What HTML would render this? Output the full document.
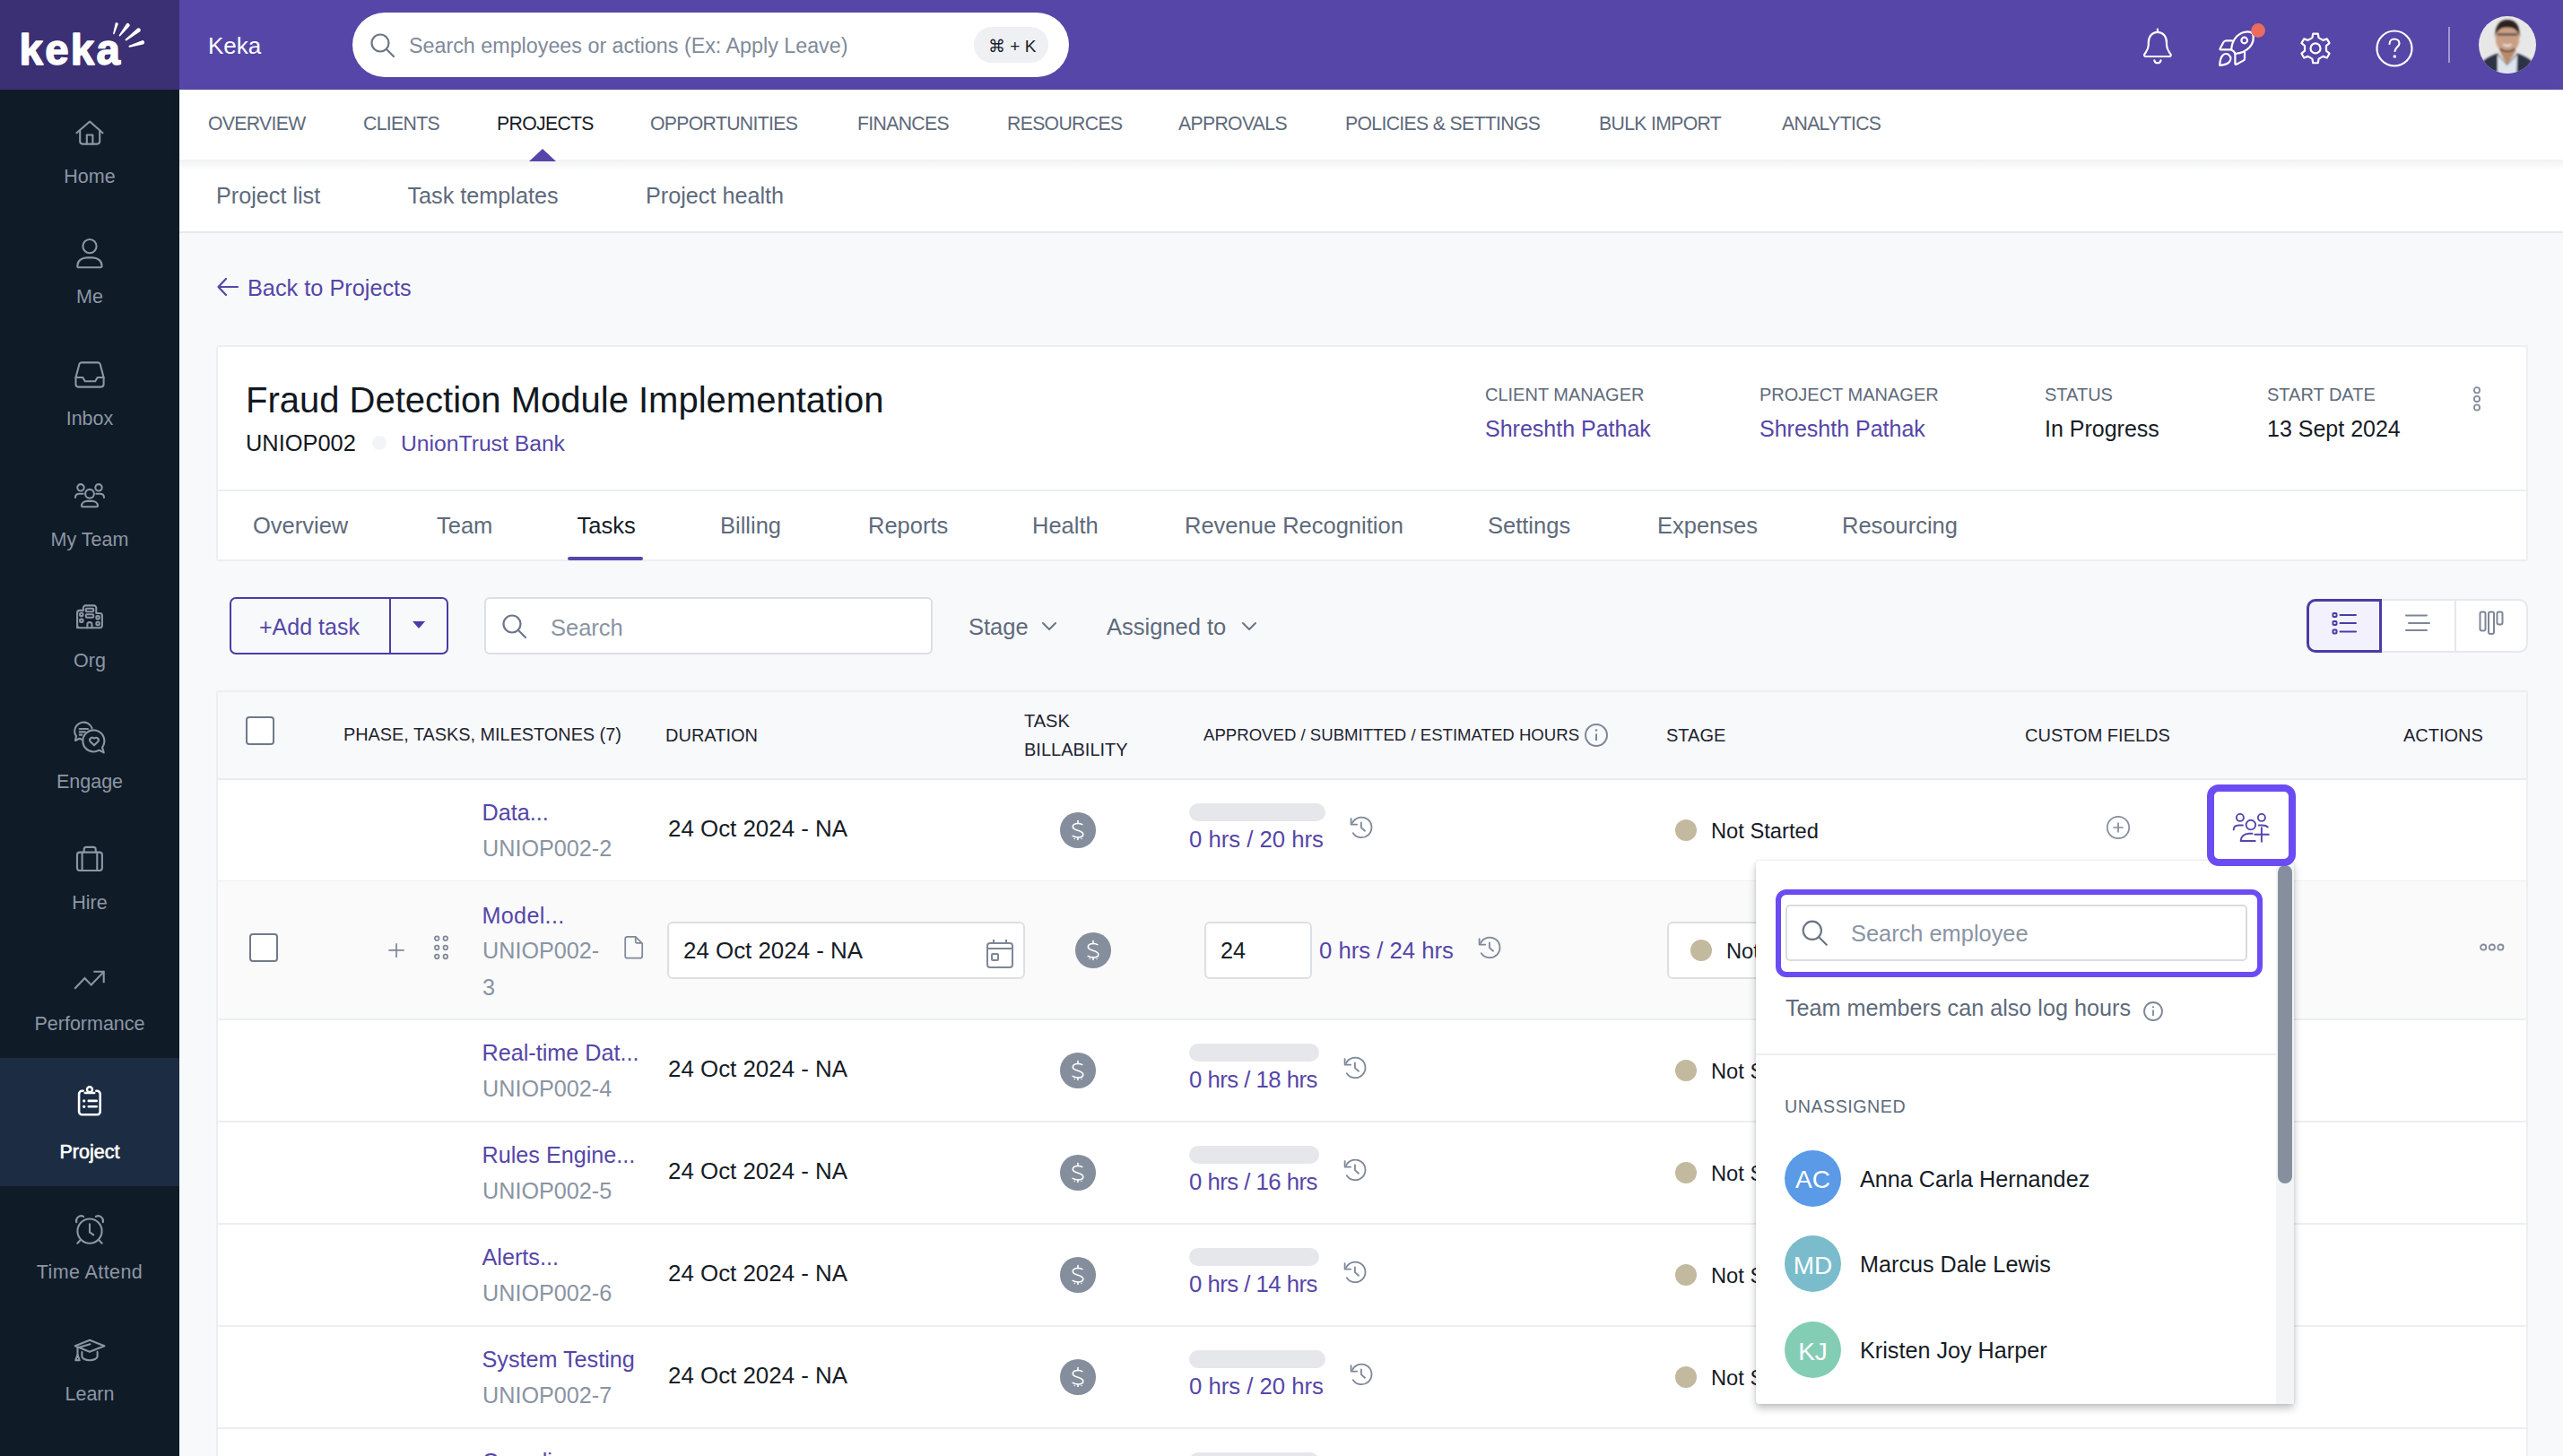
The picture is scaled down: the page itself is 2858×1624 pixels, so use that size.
<!DOCTYPE html><html><head><meta charset="utf-8"><style>
html,body{margin:0;padding:0;}
body{width:2858px;height:1624px;position:relative;overflow:hidden;background:#f8f9fb;font-family:"Liberation Sans", sans-serif;}
.a{position:absolute;box-sizing:border-box;}
.t{position:absolute;line-height:1;white-space:nowrap;}
</style></head><body>
<div class="a" style="left:0px;top:0px;width:200px;height:100px;background:#3b3074"></div>
<div class="a" style="left:0px;top:100px;width:200px;height:1524px;background:#101b28"></div>
<div class="a" style="left:0px;top:1180px;width:200px;height:143px;background:#1b2c43"></div>
<svg class="a" style="left:0px;top:0px;" width="200" height="100" viewBox="0 0 200 100" fill="none"><text x="21.6" y="71.6" font-family="Liberation Sans" font-weight="700" font-size="47.5" fill="#fff" stroke="#fff" stroke-width="1.5" stroke-linejoin="round" letter-spacing="2.2">keka</text><path d="M127.7 37.6 L131.8 27.0 A1.70 1.70 0 0 0 128.6 26.0 L126.1 37.2 A0.80 0.80 0 0 0 127.7 37.6 Z" fill="#fff"/><path d="M134.3 40.1 L144.2 29.6 A2.20 2.20 0 0 0 140.8 26.8 L132.9 38.9 A0.90 0.90 0 0 0 134.3 40.1 Z" fill="#fff"/><path d="M141.2 45.2 L156.2 35.2 A2.30 2.30 0 0 0 153.4 31.6 L140.0 43.6 A1.00 1.00 0 0 0 141.2 45.2 Z" fill="#fff"/><path d="M144.8 52.8 L159.6 49.4 A2.20 2.20 0 0 0 158.2 45.2 L144.2 50.8 A1.00 1.00 0 0 0 144.8 52.8 Z" fill="#fff"/></svg>
<svg class="a" style="left:70px;top:120px;" width="60" height="60" viewBox="0 0 60 60" fill="none"><g stroke="#8c96a4" stroke-width="2.1" stroke-linecap="round" stroke-linejoin="round" fill="none"><path d="M15.5 28.2 L30.1 15.5 L44.5 28.2"/><path d="M19.2 25.5 V37.6 a3 3 0 0 0 3 3 H38.2 a3 3 0 0 0 3-3 V25.5"/><path d="M26.8 40.6 V30.5 H33.4 V40.6"/></g></svg>
<div class="t" style="left:0;width:200px;text-align:center;top:186.9px;font-size:21.5px;color:#8c96a4;">Home</div>
<svg class="a" style="left:70px;top:253px;" width="60" height="60" viewBox="0 0 60 60" fill="none"><g stroke="#8c96a4" stroke-width="2.1" stroke-linecap="round" stroke-linejoin="round" fill="none"><circle cx="30" cy="21.6" r="7.6"/><path d="M16.3 43.7 C16.3 38 21 34.4 27 34.4 H33 C39 34.4 43.6 38 43.6 43.7 a1.6 1.6 0 0 1-1.6 1.6 H17.9 a1.6 1.6 0 0 1-1.6-1.6 Z"/></g></svg>
<div class="t" style="left:0;width:200px;text-align:center;top:321.3px;font-size:21.5px;color:#8c96a4;">Me</div>
<svg class="a" style="left:70px;top:390px;" width="60" height="60" viewBox="0 0 60 60" fill="none"><g stroke="#8c96a4" stroke-width="2.1" stroke-linecap="round" stroke-linejoin="round" fill="none"><path d="M14.5 31 L18.4 16.3 Q18.9 14.4 20.8 14.4 H39.3 Q41.2 14.4 41.7 16.3 L45.6 31 V38.6 Q45.6 41.6 42.6 41.6 H17.5 Q14.5 41.6 14.5 38.6 Z"/><path d="M14.5 31 H22.3 L24.8 35.2 H36.2 L38.7 31 H45.6"/></g></svg>
<div class="t" style="left:0;width:200px;text-align:center;top:456.9px;font-size:21.5px;color:#8c96a4;">Inbox</div>
<svg class="a" style="left:70px;top:522px;" width="60" height="60" viewBox="0 0 60 60" fill="none"><g stroke="#8c96a4" stroke-width="2.1" stroke-linecap="round" stroke-linejoin="round" fill="none"><circle cx="20" cy="21.8" r="3.7"/><circle cx="40" cy="21.8" r="3.7"/><circle cx="30" cy="28.8" r="4.9"/><path d="M14 33 C14 30.3 16 28.7 18.8 28.7 H22.7"/><path d="M37.3 28.7 H41.2 C44 28.7 46 30.3 46 33"/><path d="M21 42.2 C21 39 24 36.9 27.5 36.9 H32.5 C36 36.9 39 39 39 42.2 a1 1 0 0 1-1 1 H22 a1 1 0 0 1-1-1 Z"/></g></svg>
<div class="t" style="left:0;width:200px;text-align:center;top:591.9px;font-size:21.5px;color:#8c96a4;">My Team</div>
<svg class="a" style="left:70px;top:658px;" width="60" height="60" viewBox="0 0 60 60" fill="none"><g stroke="#8c96a4" stroke-width="2.1" stroke-linecap="round" stroke-linejoin="round" fill="none"><path d="M16.1 42.2 V25.5 a2.6 2.6 0 0 1 2.6-2.6 H22.9 V20 a2.6 2.6 0 0 1 2.6-2.6 H34.7 a2.6 2.6 0 0 1 2.6 2.6 V26 H41.3 a2.6 2.6 0 0 1 2.6 2.6 V39.6 a2.6 2.6 0 0 1-2.6 2.6 H18.7 a2.6 2.6 0 0 1-2.6-2.6"/><rect x="19.1" y="25.7" width="3.4" height="3.4" rx="1"/><rect x="19.1" y="32.5" width="3.4" height="3.4" rx="1"/><rect x="25.8" y="20.8" width="8.4" height="3.4" rx="1"/><rect x="25.8" y="27.3" width="8.4" height="3.4" rx="1"/><rect x="37.4" y="29" width="3.4" height="3.4" rx="1"/><rect x="37.4" y="35.8" width="3.4" height="3.4" rx="1"/><path d="M27.4 42.2 V38.6 a2.55 2.55 0 0 1 5.1 0 V42.2"/></g></svg>
<div class="t" style="left:0;width:200px;text-align:center;top:726.9px;font-size:21.5px;color:#8c96a4;">Org</div>
<svg class="a" style="left:70px;top:793px;" width="60" height="60" viewBox="0 0 60 60" fill="none"><g stroke="#8c96a4" stroke-width="2.1" stroke-linecap="round" stroke-linejoin="round" fill="none"><path d="M32.6 19.2 A10 10 0 0 0 13.2 23 C13.2 24.8 13.9 26.6 15 28 L14 33 L18.7 30.8 L21 31.7"/><path d="M18.7 20 H28 M18.7 23.4 H24.7 M18.7 26.6 H21.4"/><path d="M44 40.6 A12 12 0 1 0 40.6 43.7 L45.7 46.4 Z"/><path d="M35 38.3 L30.8 34.2 a2.6 2.6 0 0 1 4.2-3.5 a2.6 2.6 0 0 1 4.2 3.5 Z"/></g></svg>
<div class="t" style="left:0;width:200px;text-align:center;top:861.9px;font-size:21.5px;color:#8c96a4;">Engage</div>
<svg class="a" style="left:70px;top:929px;" width="60" height="60" viewBox="0 0 60 60" fill="none"><g stroke="#8c96a4" stroke-width="2.1" stroke-linecap="round" stroke-linejoin="round" fill="none"><rect x="16" y="21.6" width="27.9" height="20.4" rx="3"/><path d="M23.7 21.6 V18.4 a2.5 2.5 0 0 1 2.5-2.5 H34.2 a2.5 2.5 0 0 1 2.5 2.5 V21.6"/><path d="M21.6 21.6 V42 M38.3 21.6 V42"/></g></svg>
<div class="t" style="left:0;width:200px;text-align:center;top:996.9px;font-size:21.5px;color:#8c96a4;">Hire</div>
<svg class="a" style="left:70px;top:1063px;" width="60" height="60" viewBox="0 0 60 60" fill="none"><g stroke="#8c96a4" stroke-width="2.1" stroke-linecap="round" stroke-linejoin="round" fill="none"><path d="M14 38.9 L24.5 28 L31.7 35.6 L45.3 21.4" stroke-linecap="square" stroke-linejoin="miter"/><path d="M35.4 20.8 H45.7 V32.3" stroke-linecap="square" stroke-linejoin="miter"/></g></svg>
<div class="t" style="left:0;width:200px;text-align:center;top:1131.8px;font-size:21.5px;color:#8c96a4;">Performance</div>
<svg class="a" style="left:70px;top:1198px;" width="60" height="60" viewBox="0 0 60 60" fill="none"><g stroke="#ffffff" stroke-width="2.1" stroke-linecap="round" stroke-linejoin="round" fill="none"><path d="M22.7 18.8 H21.5 a3.4 3.4 0 0 0-3.4 3.4 V41.9 a3.4 3.4 0 0 0 3.4 3.4 H38.3 a3.4 3.4 0 0 0 3.4-3.4 V22.2 a3.4 3.4 0 0 0-3.4-3.4 H37.3" stroke-width="2.6"/><circle cx="30" cy="17.3" r="3" stroke-width="2.4"/><path d="M24.8 21 H35.2" stroke-width="2.6"/><path d="M28.8 29.9 H37.7 M28.8 36.3 H37.7" stroke-width="2.6"/><circle cx="23.7" cy="29.9" r="1.6" fill="#fff" stroke="none"/><circle cx="23.7" cy="36.3" r="1.6" fill="#fff" stroke="none"/></g></svg>
<div class="t" style="left:0;width:200px;text-align:center;top:1274.8px;font-size:21.5px;color:#ffffff;-webkit-text-stroke:0.6px #fff;">Project</div>
<svg class="a" style="left:70px;top:1341px;" width="60" height="60" viewBox="0 0 60 60" fill="none"><g stroke="#8c96a4" stroke-width="2.1" stroke-linecap="round" stroke-linejoin="round" fill="none"><circle cx="30" cy="32.1" r="13.6"/><path d="M15.2 22.2 A5.5 5.5 0 0 1 23.1 15.9"/><path d="M44.8 22.2 A5.5 5.5 0 0 0 36.9 15.9"/><path d="M16.3 45.7 L19.8 42 M43.7 45.7 L40.2 42"/><path d="M30 24.3 V33.4 L34.2 36.3"/></g></svg>
<div class="t" style="left:0;width:200px;text-align:center;top:1409.3px;font-size:21.5px;color:#8c96a4;letter-spacing:0.4px;">Time Attend</div>
<svg class="a" style="left:70px;top:1476px;" width="60" height="60" viewBox="0 0 60 60" fill="none"><g stroke="#8c96a4" stroke-width="2.1" stroke-linecap="round" stroke-linejoin="round" fill="none"><path d="M13.8 25.3 L30 18.7 L46.4 25.3 L30 31.7 Z"/><path d="M30.5 23.3 L16.5 27.2 V35"/><path d="M16.5 35 L14.3 41.2 H18.7 Z"/><path d="M21.4 32.1 V37 C21.4 39.5 25.5 41.2 30 41.2 C34.5 41.2 38.6 39.5 38.6 37 V31.9"/></g></svg>
<div class="t" style="left:0;width:200px;text-align:center;top:1544.7px;font-size:21.5px;color:#8c96a4;">Learn</div>
<div class="a" style="left:200px;top:0px;width:2658px;height:100px;background:#5546a8"></div>
<div class="t" style="left:232.0px;top:38.0px;font-size:26px;color:#ffffff;">Keka</div>
<div class="a" style="left:393px;top:14px;width:799px;height:72px;background:#fff;border-radius:36px"></div>
<svg class="a" style="left:412px;top:36px;" width="30" height="30" viewBox="0 0 30 30" fill="none"><circle cx="12" cy="12" r="9.5" stroke="#6b7585" stroke-width="2.2"/><path d="M19 19 L27 27" stroke="#6b7585" stroke-width="2.2" stroke-linecap="round"/></svg>
<div class="t" style="left:456.0px;top:40.3px;font-size:23.3px;color:#7f8a9a;">Search employees or actions (Ex: Apply Leave)</div>
<div class="a" style="left:1086px;top:30px;width:83px;height:40px;background:#eef0f3;border-radius:20px"></div>
<div class="t" style="left:1102.0px;top:41.9px;font-size:19px;color:#1a202c;">&#8984; + K</div>
<svg class="a" style="left:2380px;top:24px;" width="60" height="60" viewBox="0 0 60 60" fill="none"><g stroke="#fff" stroke-width="2.2" stroke-linecap="round" stroke-linejoin="round"><path d="M25.9 8.5 V11.2"/><path d="M25.9 11.8 C20 11.8 15.8 16.5 15.8 23.5 V26 C15.8 29 14.8 31.3 12.8 34.3 L11.4 36.4 C10.6 37.6 11.3 39 12.8 39 H39 C40.5 39 41.2 37.6 40.4 36.4 L39 34.3 C37 31.3 36 29 36 26 V23.5 C36 16.5 31.8 11.8 25.9 11.8 Z"/><path d="M22.3 43.4 A3.7 3.7 0 0 0 29.5 43.4"/></g></svg>
<svg class="a" style="left:2464px;top:18px;" width="70" height="64" viewBox="0 0 70 64" fill="none"><g stroke="#fff" stroke-width="2.2" stroke-linecap="round" stroke-linejoin="round"><path d="M24.2 37.6 C24.5 28 30 20 39 17.8 C43 17 46 17.5 48 19.5 C49.5 24 48.5 30 44.5 34.8 C40 39.5 34 41.5 28.5 42 C27.5 40 26 38.5 24.2 37.6 Z"/><circle cx="38.7" cy="27" r="3.3"/><path d="M25 27.3 H18.5 C17 27.3 16 28 15.3 29.3 L11.6 36.2 C11.2 37 11.6 37.4 12.4 37.4 H24"/><path d="M39 39.6 V47.5 C39 48.5 38.5 49.2 37.5 49.6 L29.8 53.8 C29 54.2 28.4 53.8 28.4 53 V42.2"/><path d="M11.2 54.8 C11.4 50 12.2 46 14.6 43.6 C16.6 41.7 19.6 41.8 21.6 43.4 C23.8 45.4 24 48.6 22 51 C19.5 54 15 54.6 11.2 54.8 Z"/></g><circle cx="54.1" cy="16" r="7.9" fill="#ea6c60"/></svg>
<svg class="a" style="left:2552px;top:24px;" width="60" height="60" viewBox="0 0 60 60" fill="none"><g stroke="#fff" stroke-width="2.2" stroke-linecap="round" stroke-linejoin="round"><path d="M26.40 18.14 L27.26 13.53 L32.74 13.53 L33.60 18.14 L38.39 20.90 L42.81 19.34 L45.55 24.09 L41.98 27.13 L41.98 32.67 L45.55 35.71 L42.81 40.46 L38.39 38.90 L33.60 41.66 L32.74 46.27 L27.26 46.27 L26.40 41.66 L21.61 38.90 L17.19 40.46 L14.45 35.71 L18.02 32.67 L18.02 27.13 L14.45 24.09 L17.19 19.34 L21.61 20.90 Z"/><circle cx="30" cy="29.9" r="5.5"/></g></svg>
<svg class="a" style="left:2648px;top:32px;" width="44" height="44" viewBox="0 0 44 44" fill="none"><g stroke="#fff" stroke-width="2.2" stroke-linecap="round" stroke-linejoin="round"><circle cx="22" cy="22" r="19.5"/><path d="M16.5 17 C16.5 13.5 19 11.5 22 11.5 C25 11.5 27.5 13.5 27.5 16.5 C27.5 20 22.5 21 22.5 25"/></g><circle cx="22.3" cy="31" r="1.8" fill="#fff"/></svg>
<div class="a" style="left:2730px;top:30px;width:2px;height:40px;background:rgba(255,255,255,0.45)"></div>
<svg class="a" style="left:2764px;top:18px;" width="64" height="64" viewBox="0 0 64 64" fill="none"><defs><clipPath id="avc"><circle cx="32" cy="32" r="32"/></clipPath><filter id="avb" x="-10%" y="-10%" width="120%" height="120%"><feGaussianBlur stdDeviation="0.9"/></filter></defs>
<g clip-path="url(#avc)"><rect width="64" height="64" fill="#e8e7e7"/>
<g filter="url(#avb)">
<path d="M0 64 L3 52 C8 47 14 44 21 41.5 L31.6 54 L43 41.5 C50 44 56 47 60 51 L64 64 Z" fill="#2d3344"/>
<path d="M21 43 L31.6 55 L43 43 L42.5 64 H21 Z" fill="#dde4ee"/>
<path d="M23 38 L31.6 54.5 L42 38 Z" fill="#b98a6c"/>
<ellipse cx="32" cy="25.5" rx="13.2" ry="15.5" fill="#caa085"/>
<path d="M18.6 24 C17.5 10 24 4 32 4 C41 4 46.5 10 45.5 24 C44 17 41 12.5 32 12.5 C23 12.5 20 17 18.6 24 Z" fill="#2a201c"/>
<path d="M21 20.5 H43" stroke="#4a4040" stroke-width="2.2"/>
<path d="M27.5 31.5 C30 33.5 34 33.5 36.5 31.5" stroke="#f2e6ea" stroke-width="2.2"/>
<path d="M24 36 C27 40.5 37 40.5 40 36" stroke="#3a2a22" stroke-width="1.6"/>
</g></g></svg>
<div class="a" style="left:200px;top:100px;width:2658px;height:78px;background:#fff;box-shadow:0 3px 8px rgba(20,30,50,0.08)"></div>
<div class="t" style="left:232.0px;top:127.1px;font-size:21.2px;color:#5e6a7b;letter-spacing:-0.65px;">OVERVIEW</div>
<div class="t" style="left:405.0px;top:127.1px;font-size:21.2px;color:#5e6a7b;letter-spacing:-0.65px;">CLIENTS</div>
<div class="t" style="left:554.0px;top:127.1px;font-size:21.2px;color:#161c26;letter-spacing:-0.65px;">PROJECTS</div>
<div class="t" style="left:725.0px;top:127.1px;font-size:21.2px;color:#5e6a7b;letter-spacing:-0.65px;">OPPORTUNITIES</div>
<div class="t" style="left:956.0px;top:127.1px;font-size:21.2px;color:#5e6a7b;letter-spacing:-0.65px;">FINANCES</div>
<div class="t" style="left:1123.0px;top:127.1px;font-size:21.2px;color:#5e6a7b;letter-spacing:-0.65px;">RESOURCES</div>
<div class="t" style="left:1314.0px;top:127.1px;font-size:21.2px;color:#5e6a7b;letter-spacing:-0.65px;">APPROVALS</div>
<div class="t" style="left:1500.0px;top:127.1px;font-size:21.2px;color:#5e6a7b;letter-spacing:-0.65px;">POLICIES &amp; SETTINGS</div>
<div class="t" style="left:1783.0px;top:127.1px;font-size:21.2px;color:#5e6a7b;letter-spacing:-0.65px;">BULK IMPORT</div>
<div class="t" style="left:1987.0px;top:127.1px;font-size:21.2px;color:#5e6a7b;letter-spacing:-0.65px;">ANALYTICS</div>
<div class="a" style="left:200px;top:178px;width:2658px;height:82px;background:#fff;border-bottom:2px solid #e6e8ec"></div>
<div class="a" style="left:200px;top:178px;width:2658px;height:12px;background:linear-gradient(rgba(20,30,50,0.06),rgba(20,30,50,0))"></div>
<svg class="a" style="left:590px;top:166px;" width="30" height="14" viewBox="0 0 30 14" fill="none"><path d="M0 14 L15 0 L30 14 Z" fill="#5546a8"/></svg>
<div class="t" style="left:241.0px;top:205.7px;font-size:25.2px;color:#5e6a7b;">Project list</div>
<div class="t" style="left:454.5px;top:205.7px;font-size:25.2px;color:#5e6a7b;">Task templates</div>
<div class="t" style="left:720.0px;top:205.7px;font-size:25.2px;color:#5e6a7b;">Project health</div>
<svg class="a" style="left:241px;top:308px;" width="26" height="24" viewBox="0 0 26 24" fill="none"><g stroke="#5546a8" stroke-width="2.2" stroke-linecap="round" stroke-linejoin="round"><path d="M24 12 H3"/><path d="M11 3 L2.5 12 L11 21"/></g></svg>
<div class="t" style="left:276.0px;top:308.6px;font-size:25.3px;color:#5546a8;">Back to Projects</div>
<div class="a" style="left:241px;top:385px;width:2578px;height:241px;background:#fff;border:2px solid #eceef2;border-radius:3px"></div>
<div class="a" style="left:243px;top:546px;width:2574px;height:2px;background:#eceef2"></div>
<div class="t" style="left:274.0px;top:426.0px;font-size:40px;color:#121821;">Fraud Detection Module Implementation</div>
<div class="t" style="left:274.0px;top:482.0px;font-size:25.4px;color:#121821;">UNIOP002</div>
<div class="a" style="left:415px;top:486px;width:16px;height:16px;border-radius:50%;background:#f3f4f7"></div>
<div class="t" style="left:447.0px;top:482.6px;font-size:24.7px;color:#5546a8;">UnionTrust Bank</div>
<div class="t" style="left:1656.0px;top:430.1px;font-size:20px;color:#5e6a7b;">CLIENT MANAGER</div>
<div class="t" style="left:1656.0px;top:466.1px;font-size:25px;color:#5546a8;">Shreshth Pathak</div>
<div class="t" style="left:1962.0px;top:430.1px;font-size:20px;color:#5e6a7b;">PROJECT MANAGER</div>
<div class="t" style="left:1962.0px;top:466.1px;font-size:25px;color:#5546a8;">Shreshth Pathak</div>
<div class="t" style="left:2280.0px;top:430.1px;font-size:20px;color:#5e6a7b;">STATUS</div>
<div class="t" style="left:2280.0px;top:466.1px;font-size:25px;color:#161c26;">In Progress</div>
<div class="t" style="left:2528.0px;top:430.1px;font-size:20px;color:#5e6a7b;">START DATE</div>
<div class="t" style="left:2528.0px;top:466.1px;font-size:25px;color:#161c26;">13 Sept 2024</div>
<svg class="a" style="left:2754px;top:429px;" width="16" height="32" viewBox="0 0 16 32" fill="none"><g stroke="#838c9b" stroke-width="1.8"><circle cx="8" cy="6.3" r="3.1"/><circle cx="8" cy="15.9" r="3.1"/><circle cx="8" cy="25.5" r="3.1"/></g></svg>
<div class="t" style="left:282.0px;top:573.5px;font-size:25.5px;color:#5e6a7b;">Overview</div>
<div class="t" style="left:487.0px;top:573.5px;font-size:25.5px;color:#5e6a7b;">Team</div>
<div class="t" style="left:643.5px;top:573.5px;font-size:25.5px;color:#161c26;">Tasks</div>
<div class="t" style="left:803.0px;top:573.5px;font-size:25.5px;color:#5e6a7b;">Billing</div>
<div class="t" style="left:968.0px;top:573.5px;font-size:25.5px;color:#5e6a7b;">Reports</div>
<div class="t" style="left:1151.0px;top:573.5px;font-size:25.5px;color:#5e6a7b;">Health</div>
<div class="t" style="left:1321.0px;top:573.5px;font-size:25.5px;color:#5e6a7b;">Revenue Recognition</div>
<div class="t" style="left:1659.0px;top:573.5px;font-size:25.5px;color:#5e6a7b;">Settings</div>
<div class="t" style="left:1848.0px;top:573.5px;font-size:25.5px;color:#5e6a7b;">Expenses</div>
<div class="t" style="left:2054.0px;top:573.5px;font-size:25.5px;color:#5e6a7b;">Resourcing</div>
<div class="a" style="left:633px;top:621px;width:84px;height:4px;background:#5546a8;border-radius:2px"></div>
<div class="a" style="left:256px;top:666px;width:244px;height:64px;border:2px solid #4a3ca6;border-radius:7px"></div>
<div class="a" style="left:434px;top:667px;width:2px;height:62px;background:#4a3ca6"></div>
<div class="t" style="left:289.0px;top:687.4px;font-size:25px;color:#5546a8;">+Add task</div>
<svg class="a" style="left:459px;top:692px;" width="16" height="10" viewBox="0 0 16 10" fill="none"><path d="M1 1 H15 L8 9 Z" fill="#4a3ca6"/></svg>
<div class="a" style="left:540px;top:666px;width:500px;height:64px;background:#fff;border:2px solid #dcdfe4;border-radius:6px"></div>
<svg class="a" style="left:559px;top:684px;" width="30" height="30" viewBox="0 0 30 30" fill="none"><circle cx="12" cy="12" r="9.5" stroke="#6b7585" stroke-width="2.2"/><path d="M19 19 L27 27" stroke="#6b7585" stroke-width="2.2" stroke-linecap="round"/></svg>
<div class="t" style="left:614.0px;top:687.5px;font-size:25.5px;color:#8a94a3;">Search</div>
<div class="t" style="left:1080.0px;top:687.0px;font-size:25.5px;color:#5e6a7b;">Stage</div>
<svg class="a" style="left:1161px;top:693px;" width="18" height="12" viewBox="0 0 18 12" fill="none"><path d="M2 2 L9 9 L16 2" stroke="#6b7585" stroke-width="2" stroke-linecap="round" stroke-linejoin="round"/></svg>
<div class="t" style="left:1234.0px;top:687.0px;font-size:25.5px;color:#5e6a7b;">Assigned to</div>
<svg class="a" style="left:1384px;top:693px;" width="18" height="12" viewBox="0 0 18 12" fill="none"><path d="M2 2 L9 9 L16 2" stroke="#6b7585" stroke-width="2" stroke-linecap="round" stroke-linejoin="round"/></svg>
<div class="a" style="left:2572px;top:668px;width:247px;height:60px;background:#fff;border:2px solid #e6e8ec;border-radius:10px"></div>
<div class="a" style="left:2737px;top:670px;width:2px;height:56px;background:#e6e8ec"></div>
<div class="a" style="left:2572px;top:668px;width:84px;height:60px;background:#f3f1fd;border:3px solid #4a3ca6;border-top-left-radius:10px;border-bottom-left-radius:10px"></div>
<svg class="a" style="left:2599px;top:682px;" width="32" height="26" viewBox="0 0 32 26" fill="none"><g stroke="#4a3ca6" stroke-width="2" stroke-linecap="round"><rect x="2.5" y="2" width="4" height="4" rx="0.8"/><rect x="2.5" y="11" width="4" height="4" rx="0.8"/><rect x="2.5" y="20.5" width="4" height="4" rx="0.8"/><path d="M10.5 4 H28 M10.5 13 H28 M10.5 22.5 H28"/></g></svg>
<svg class="a" style="left:2680px;top:683px;" width="32" height="24" viewBox="0 0 32 24" fill="none"><g stroke="#7d8797" stroke-width="2" stroke-linecap="round"><path d="M3 3.5 H26 M6 12 H29 M3 20 H26"/></g></svg>
<svg class="a" style="left:2762px;top:680px;" width="34" height="30" viewBox="0 0 34 30" fill="none"><g stroke="#7d8797" stroke-width="2"><rect x="3.5" y="2.5" width="6" height="21" rx="2"/><rect x="13" y="2.5" width="6" height="24.5" rx="2"/><rect x="22.5" y="2.5" width="6" height="14" rx="2"/></g></svg>
<div class="a" style="left:241px;top:770px;width:2578px;height:930px;background:#fff;border:2px solid #eceef2;border-radius:3px 3px 0 0"></div>
<div class="a" style="left:243px;top:772px;width:2574px;height:97px;background:#f8f9fb"></div>
<div class="a" style="left:243px;top:868px;width:2574px;height:2px;background:#e9ebef"></div>
<div class="a" style="left:274px;top:799px;width:32px;height:32px;border:2px solid #6f7a8a;border-radius:4px;background:#fff"></div>
<div class="t" style="left:383.0px;top:810.2px;font-size:19.85px;color:#1e2430;">PHASE, TASKS, MILESTONES (7)</div>
<div class="t" style="left:742.0px;top:810.1px;font-size:20px;color:#1e2430;">DURATION</div>
<div class="t" style="left:1142.0px;top:793.9px;font-size:20px;color:#1e2430;">TASK</div>
<div class="t" style="left:1142.0px;top:825.9px;font-size:20px;color:#1e2430;">BILLABILITY</div>
<div class="t" style="left:1342.0px;top:811.3px;font-size:18.6px;color:#1e2430;">APPROVED / SUBMITTED / ESTIMATED HOURS</div>
<svg class="a" style="left:1766px;top:806px;" width="28" height="28" viewBox="0 0 28 28" fill="none"><circle cx="14" cy="14" r="12" stroke="#7d8797" stroke-width="2"/><path d="M14 12.5 V20" stroke="#7d8797" stroke-width="2"/><circle cx="14" cy="8.5" r="1.3" fill="#7d8797"/></svg>
<div class="t" style="left:1858.0px;top:810.1px;font-size:20px;color:#1e2430;">STAGE</div>
<div class="t" style="left:2258.0px;top:810.1px;font-size:20px;color:#1e2430;">CUSTOM FIELDS</div>
<div class="t" style="left:2680.0px;top:810.1px;font-size:20px;color:#1e2430;">ACTIONS</div>
<div class="a" style="left:243px;top:982px;width:2574px;height:2px;background:#eceef2"></div>
<div class="t" style="left:537.5px;top:894.3px;font-size:25.2px;color:#5546a8;">Data...</div>
<div class="t" style="left:538.0px;top:934.0px;font-size:25.2px;color:#8a94a3;">UNIOP002-2</div>
<div class="t" style="left:745.0px;top:911.5px;font-size:25.9px;color:#161c26;">24 Oct 2024 - NA</div>
<div class="a" style="left:1182.2px;top:906.2px;width:39.6px;height:39.6px;border-radius:50%;background:#858e9d"></div>
<svg class="a" style="left:1176px;top:900px;" width="52" height="52" viewBox="0 0 52 52" fill="none"><g stroke="#fff" stroke-width="1.6" stroke-linecap="round"><path d="M26 15.6 V18.4"/><path d="M30.8 19.6 C29.5 18.8 28 18.5 26 18.5 C22.5 18.5 20.3 20 20.3 22.3 C20.3 27 31.8 25.5 31.8 30.5 C31.8 33 29.3 34 26.2 34 C23.5 34 21.5 33.3 20.2 32.4"/><path d="M26 34 V36.4"/></g><circle cx="22.3" cy="35.5" r="0.7" fill="#fff"/><circle cx="30" cy="35.5" r="0.7" fill="#fff"/></svg>
<div class="a" style="left:1326px;top:896px;height:20px;padding-right:2px;border-radius:10px;background:#e5e7eb;font-size:25.7px;letter-spacing:0px;color:transparent;white-space:nowrap;line-height:20px">0 hrs / 20 hrs</div>
<div class="t" style="left:1326.0px;top:924.3px;font-size:25.7px;color:#5546a8;">0 hrs / 20 hrs</div>
<svg class="a" style="left:1501.5px;top:907px;" width="32" height="32" viewBox="0 0 32 32" fill="none"><g stroke="#7d8797" stroke-width="1.8" stroke-linecap="round" stroke-linejoin="round"><path d="M6.8 22.2 A11.3 11.3 0 1 0 6.1 10.8"/><path d="M4.6 6.1 V12.6 H11.1"/><path d="M15.9 10.4 V16.1 L20 19.7"/></g></svg>
<div class="a" style="left:1868px;top:914px;width:24px;height:24px;border-radius:50%;background:#c2b99f"></div>
<div class="t" style="left:1908.0px;top:915.5px;font-size:23.7px;color:#161c26;">Not Started</div>
<svg class="a" style="left:2347px;top:908px;" width="30" height="30" viewBox="0 0 30 30" fill="none"><g stroke="#838c9b" stroke-width="1.7"><circle cx="15" cy="15" r="12.2"/><path d="M15 9.4 V20.6 M9.4 15 H20.6"/></g></svg>
<div class="a" style="left:243px;top:983px;width:2574px;height:154px;background:#fafafb"></div>
<div class="a" style="left:243px;top:1136px;width:2574px;height:2px;background:#eceef2"></div>
<div class="a" style="left:278px;top:1041px;width:32px;height:32px;border:2px solid #6f7a8a;border-radius:4px;background:#fff"></div>
<svg class="a" style="left:431px;top:1049px;" width="22" height="22" viewBox="0 0 22 22" fill="none"><path d="M11 3.3 V19 M2.3 10.8 H19.7" stroke="#7d8797" stroke-width="1.7"/></svg>
<svg class="a" style="left:482px;top:1042px;" width="20" height="30" viewBox="0 0 20 30" fill="none"><g stroke="#7d8797" stroke-width="1.7"><circle cx="5.2" cy="4.7" r="2.3"/><circle cx="14.8" cy="4.7" r="2.3"/><circle cx="5.2" cy="15" r="2.3"/><circle cx="14.8" cy="15" r="2.3"/><circle cx="5.2" cy="25" r="2.3"/><circle cx="14.8" cy="25" r="2.3"/></g></svg>
<div class="t" style="left:537.5px;top:1008.7px;font-size:25.2px;color:#5546a8;letter-spacing:0.3px;">Model...</div>
<div class="t" style="left:538.0px;top:1048.2px;font-size:25.2px;color:#8a94a3;">UNIOP002-</div>
<div class="t" style="left:538.0px;top:1088.7px;font-size:25.2px;color:#8a94a3;">3</div>
<svg class="a" style="left:695px;top:1042px;" width="26" height="30" viewBox="0 0 26 30" fill="none"><path d="M2.2 5 a2.2 2.2 0 0 1 2.2-2.2 H13.7 L21.2 10.3 V24.5 a2.2 2.2 0 0 1-2.2 2.2 H4.4 a2.2 2.2 0 0 1-2.2-2.2 Z M13.7 2.8 V8.3 a1.5 1.5 0 0 0 1.5 1.5 H21.2" stroke="#7d8797" stroke-width="1.7" stroke-linejoin="round"/></svg>
<div class="a" style="left:744px;top:1028px;width:399px;height:64px;background:#fff;border:2px solid #dcdfe4;border-radius:6px"></div>
<div class="t" style="left:762.0px;top:1048.1px;font-size:25.9px;color:#161c26;">24 Oct 2024 - NA</div>
<svg class="a" style="left:1098px;top:1045.5px;" width="34" height="36" viewBox="0 0 34 36" fill="none"><g stroke="#7d8797" stroke-width="2" stroke-linejoin="round"><rect x="3" y="6" width="28" height="27" rx="3"/><path d="M3 12 H31 M10 2 V7 M24 2 V7"/><rect x="8" y="18" width="7" height="7" rx="1"/></g></svg>
<div class="a" style="left:1199.2px;top:1040.2px;width:39.6px;height:39.6px;border-radius:50%;background:#858e9d"></div>
<svg class="a" style="left:1193px;top:1034px;" width="52" height="52" viewBox="0 0 52 52" fill="none"><g stroke="#fff" stroke-width="1.6" stroke-linecap="round"><path d="M26 15.6 V18.4"/><path d="M30.8 19.6 C29.5 18.8 28 18.5 26 18.5 C22.5 18.5 20.3 20 20.3 22.3 C20.3 27 31.8 25.5 31.8 30.5 C31.8 33 29.3 34 26.2 34 C23.5 34 21.5 33.3 20.2 32.4"/><path d="M26 34 V36.4"/></g><circle cx="22.3" cy="35.5" r="0.7" fill="#fff"/><circle cx="30" cy="35.5" r="0.7" fill="#fff"/></svg>
<div class="a" style="left:1343px;top:1028px;width:120px;height:64px;background:#fff;border:2px solid #dcdfe4;border-radius:6px"></div>
<div class="t" style="left:1361.0px;top:1048.4px;font-size:25.2px;color:#161c26;">24</div>
<div class="t" style="left:1471.0px;top:1048.0px;font-size:25.7px;color:#5546a8;">0 hrs / 24 hrs</div>
<svg class="a" style="left:1645px;top:1040.5px;" width="32" height="32" viewBox="0 0 32 32" fill="none"><g stroke="#7d8797" stroke-width="1.8" stroke-linecap="round" stroke-linejoin="round"><path d="M6.8 22.2 A11.3 11.3 0 1 0 6.1 10.8"/><path d="M4.6 6.1 V12.6 H11.1"/><path d="M15.9 10.4 V16.1 L20 19.7"/></g></svg>
<div class="a" style="left:1859px;top:1028px;width:241px;height:64px;background:#fff;border:2px solid #dcdfe4;border-radius:6px"></div>
<div class="a" style="left:1885px;top:1048px;width:24px;height:24px;border-radius:50%;background:#c2b99f"></div>
<div class="t" style="left:1925.0px;top:1050.0px;font-size:23.7px;color:#161c26;">Not Started</div>
<svg class="a" style="left:2762px;top:1049px;" width="34" height="16" viewBox="0 0 34 16" fill="none"><g stroke="#838c9b" stroke-width="1.8"><circle cx="7.2" cy="7.6" r="3.1"/><circle cx="16.8" cy="7.6" r="3.1"/><circle cx="26.4" cy="7.6" r="3.1"/></g></svg>
<div class="a" style="left:243px;top:1250px;width:2574px;height:2px;background:#eceef2"></div>
<div class="t" style="left:537.5px;top:1162.3px;font-size:25.2px;color:#5546a8;">Real-time Dat...</div>
<div class="t" style="left:538.0px;top:1202.0px;font-size:25.2px;color:#8a94a3;">UNIOP002-4</div>
<div class="t" style="left:745.0px;top:1179.5px;font-size:25.9px;color:#161c26;">24 Oct 2024 - NA</div>
<div class="a" style="left:1182.2px;top:1174.2px;width:39.6px;height:39.6px;border-radius:50%;background:#858e9d"></div>
<svg class="a" style="left:1176px;top:1168px;" width="52" height="52" viewBox="0 0 52 52" fill="none"><g stroke="#fff" stroke-width="1.6" stroke-linecap="round"><path d="M26 15.6 V18.4"/><path d="M30.8 19.6 C29.5 18.8 28 18.5 26 18.5 C22.5 18.5 20.3 20 20.3 22.3 C20.3 27 31.8 25.5 31.8 30.5 C31.8 33 29.3 34 26.2 34 C23.5 34 21.5 33.3 20.2 32.4"/><path d="M26 34 V36.4"/></g><circle cx="22.3" cy="35.5" r="0.7" fill="#fff"/><circle cx="30" cy="35.5" r="0.7" fill="#fff"/></svg>
<div class="a" style="left:1326px;top:1164px;height:20px;padding-right:2px;border-radius:10px;background:#e5e7eb;font-size:25.7px;letter-spacing:-0.5px;color:transparent;white-space:nowrap;line-height:20px">0 hrs / 18 hrs</div>
<div class="t" style="left:1326.0px;top:1192.3px;font-size:25.7px;color:#5546a8;letter-spacing:-0.5px;">0 hrs / 18 hrs</div>
<svg class="a" style="left:1494.5px;top:1175px;" width="32" height="32" viewBox="0 0 32 32" fill="none"><g stroke="#7d8797" stroke-width="1.8" stroke-linecap="round" stroke-linejoin="round"><path d="M6.8 22.2 A11.3 11.3 0 1 0 6.1 10.8"/><path d="M4.6 6.1 V12.6 H11.1"/><path d="M15.9 10.4 V16.1 L20 19.7"/></g></svg>
<div class="a" style="left:1868px;top:1182px;width:24px;height:24px;border-radius:50%;background:#c2b99f"></div>
<div class="t" style="left:1908.0px;top:1183.5px;font-size:23.7px;color:#161c26;">Not Started</div>
<div class="a" style="left:243px;top:1364px;width:2574px;height:2px;background:#eceef2"></div>
<div class="t" style="left:537.5px;top:1276.3px;font-size:25.2px;color:#5546a8;">Rules Engine...</div>
<div class="t" style="left:538.0px;top:1316.0px;font-size:25.2px;color:#8a94a3;">UNIOP002-5</div>
<div class="t" style="left:745.0px;top:1293.5px;font-size:25.9px;color:#161c26;">24 Oct 2024 - NA</div>
<div class="a" style="left:1182.2px;top:1288.2px;width:39.6px;height:39.6px;border-radius:50%;background:#858e9d"></div>
<svg class="a" style="left:1176px;top:1282px;" width="52" height="52" viewBox="0 0 52 52" fill="none"><g stroke="#fff" stroke-width="1.6" stroke-linecap="round"><path d="M26 15.6 V18.4"/><path d="M30.8 19.6 C29.5 18.8 28 18.5 26 18.5 C22.5 18.5 20.3 20 20.3 22.3 C20.3 27 31.8 25.5 31.8 30.5 C31.8 33 29.3 34 26.2 34 C23.5 34 21.5 33.3 20.2 32.4"/><path d="M26 34 V36.4"/></g><circle cx="22.3" cy="35.5" r="0.7" fill="#fff"/><circle cx="30" cy="35.5" r="0.7" fill="#fff"/></svg>
<div class="a" style="left:1326px;top:1278px;height:20px;padding-right:2px;border-radius:10px;background:#e5e7eb;font-size:25.7px;letter-spacing:-0.5px;color:transparent;white-space:nowrap;line-height:20px">0 hrs / 16 hrs</div>
<div class="t" style="left:1326.0px;top:1306.3px;font-size:25.7px;color:#5546a8;letter-spacing:-0.5px;">0 hrs / 16 hrs</div>
<svg class="a" style="left:1494.5px;top:1289px;" width="32" height="32" viewBox="0 0 32 32" fill="none"><g stroke="#7d8797" stroke-width="1.8" stroke-linecap="round" stroke-linejoin="round"><path d="M6.8 22.2 A11.3 11.3 0 1 0 6.1 10.8"/><path d="M4.6 6.1 V12.6 H11.1"/><path d="M15.9 10.4 V16.1 L20 19.7"/></g></svg>
<div class="a" style="left:1868px;top:1296px;width:24px;height:24px;border-radius:50%;background:#c2b99f"></div>
<div class="t" style="left:1908.0px;top:1297.5px;font-size:23.7px;color:#161c26;">Not Started</div>
<div class="a" style="left:243px;top:1478px;width:2574px;height:2px;background:#eceef2"></div>
<div class="t" style="left:537.5px;top:1390.3px;font-size:25.2px;color:#5546a8;">Alerts...</div>
<div class="t" style="left:538.0px;top:1430.0px;font-size:25.2px;color:#8a94a3;">UNIOP002-6</div>
<div class="t" style="left:745.0px;top:1407.5px;font-size:25.9px;color:#161c26;">24 Oct 2024 - NA</div>
<div class="a" style="left:1182.2px;top:1402.2px;width:39.6px;height:39.6px;border-radius:50%;background:#858e9d"></div>
<svg class="a" style="left:1176px;top:1396px;" width="52" height="52" viewBox="0 0 52 52" fill="none"><g stroke="#fff" stroke-width="1.6" stroke-linecap="round"><path d="M26 15.6 V18.4"/><path d="M30.8 19.6 C29.5 18.8 28 18.5 26 18.5 C22.5 18.5 20.3 20 20.3 22.3 C20.3 27 31.8 25.5 31.8 30.5 C31.8 33 29.3 34 26.2 34 C23.5 34 21.5 33.3 20.2 32.4"/><path d="M26 34 V36.4"/></g><circle cx="22.3" cy="35.5" r="0.7" fill="#fff"/><circle cx="30" cy="35.5" r="0.7" fill="#fff"/></svg>
<div class="a" style="left:1326px;top:1392px;height:20px;padding-right:2px;border-radius:10px;background:#e5e7eb;font-size:25.7px;letter-spacing:-0.5px;color:transparent;white-space:nowrap;line-height:20px">0 hrs / 14 hrs</div>
<div class="t" style="left:1326.0px;top:1420.3px;font-size:25.7px;color:#5546a8;letter-spacing:-0.5px;">0 hrs / 14 hrs</div>
<svg class="a" style="left:1494.5px;top:1403px;" width="32" height="32" viewBox="0 0 32 32" fill="none"><g stroke="#7d8797" stroke-width="1.8" stroke-linecap="round" stroke-linejoin="round"><path d="M6.8 22.2 A11.3 11.3 0 1 0 6.1 10.8"/><path d="M4.6 6.1 V12.6 H11.1"/><path d="M15.9 10.4 V16.1 L20 19.7"/></g></svg>
<div class="a" style="left:1868px;top:1410px;width:24px;height:24px;border-radius:50%;background:#c2b99f"></div>
<div class="t" style="left:1908.0px;top:1411.5px;font-size:23.7px;color:#161c26;">Not Started</div>
<div class="a" style="left:243px;top:1592px;width:2574px;height:2px;background:#eceef2"></div>
<div class="t" style="left:537.5px;top:1504.3px;font-size:25.2px;color:#5546a8;">System Testing</div>
<div class="t" style="left:538.0px;top:1544.0px;font-size:25.2px;color:#8a94a3;">UNIOP002-7</div>
<div class="t" style="left:745.0px;top:1521.5px;font-size:25.9px;color:#161c26;">24 Oct 2024 - NA</div>
<div class="a" style="left:1182.2px;top:1516.2px;width:39.6px;height:39.6px;border-radius:50%;background:#858e9d"></div>
<svg class="a" style="left:1176px;top:1510px;" width="52" height="52" viewBox="0 0 52 52" fill="none"><g stroke="#fff" stroke-width="1.6" stroke-linecap="round"><path d="M26 15.6 V18.4"/><path d="M30.8 19.6 C29.5 18.8 28 18.5 26 18.5 C22.5 18.5 20.3 20 20.3 22.3 C20.3 27 31.8 25.5 31.8 30.5 C31.8 33 29.3 34 26.2 34 C23.5 34 21.5 33.3 20.2 32.4"/><path d="M26 34 V36.4"/></g><circle cx="22.3" cy="35.5" r="0.7" fill="#fff"/><circle cx="30" cy="35.5" r="0.7" fill="#fff"/></svg>
<div class="a" style="left:1326px;top:1506px;height:20px;padding-right:2px;border-radius:10px;background:#e5e7eb;font-size:25.7px;letter-spacing:0px;color:transparent;white-space:nowrap;line-height:20px">0 hrs / 20 hrs</div>
<div class="t" style="left:1326.0px;top:1534.3px;font-size:25.7px;color:#5546a8;">0 hrs / 20 hrs</div>
<svg class="a" style="left:1501.5px;top:1517px;" width="32" height="32" viewBox="0 0 32 32" fill="none"><g stroke="#7d8797" stroke-width="1.8" stroke-linecap="round" stroke-linejoin="round"><path d="M6.8 22.2 A11.3 11.3 0 1 0 6.1 10.8"/><path d="M4.6 6.1 V12.6 H11.1"/><path d="M15.9 10.4 V16.1 L20 19.7"/></g></svg>
<div class="a" style="left:1868px;top:1524px;width:24px;height:24px;border-radius:50%;background:#c2b99f"></div>
<div class="t" style="left:1908.0px;top:1525.5px;font-size:23.7px;color:#161c26;">Not Started</div>
<div class="a" style="left:243px;top:1706px;width:2574px;height:2px;background:#eceef2"></div>
<div class="t" style="left:537.5px;top:1618.3px;font-size:25.2px;color:#5546a8;">Compliance...</div>
<div class="t" style="left:538.0px;top:1658.0px;font-size:25.2px;color:#8a94a3;">UNIOP002-8</div>
<div class="t" style="left:745.0px;top:1635.5px;font-size:25.9px;color:#161c26;">24 Oct 2024 - NA</div>
<div class="a" style="left:1182.2px;top:1630.2px;width:39.6px;height:39.6px;border-radius:50%;background:#858e9d"></div>
<svg class="a" style="left:1176px;top:1624px;" width="52" height="52" viewBox="0 0 52 52" fill="none"><g stroke="#fff" stroke-width="1.6" stroke-linecap="round"><path d="M26 15.6 V18.4"/><path d="M30.8 19.6 C29.5 18.8 28 18.5 26 18.5 C22.5 18.5 20.3 20 20.3 22.3 C20.3 27 31.8 25.5 31.8 30.5 C31.8 33 29.3 34 26.2 34 C23.5 34 21.5 33.3 20.2 32.4"/><path d="M26 34 V36.4"/></g><circle cx="22.3" cy="35.5" r="0.7" fill="#fff"/><circle cx="30" cy="35.5" r="0.7" fill="#fff"/></svg>
<div class="a" style="left:1326px;top:1620px;height:20px;padding-right:2px;border-radius:10px;background:#e5e7eb;font-size:25.7px;letter-spacing:-0.5px;color:transparent;white-space:nowrap;line-height:20px">0 hrs / 12 hrs</div>
<div class="t" style="left:1326.0px;top:1648.3px;font-size:25.7px;color:#5546a8;letter-spacing:-0.5px;">0 hrs / 12 hrs</div>
<svg class="a" style="left:1494.5px;top:1631px;" width="32" height="32" viewBox="0 0 32 32" fill="none"><g stroke="#7d8797" stroke-width="1.8" stroke-linecap="round" stroke-linejoin="round"><path d="M6.8 22.2 A11.3 11.3 0 1 0 6.1 10.8"/><path d="M4.6 6.1 V12.6 H11.1"/><path d="M15.9 10.4 V16.1 L20 19.7"/></g></svg>
<div class="a" style="left:1868px;top:1638px;width:24px;height:24px;border-radius:50%;background:#c2b99f"></div>
<div class="t" style="left:1908.0px;top:1639.5px;font-size:23.7px;color:#161c26;">Not Started</div>
<div class="a" style="left:1958px;top:960px;width:600px;height:606px;background:#fff;border-radius:4px;box-shadow:0 5px 9px rgba(10,15,25,0.24), 0 0 3px rgba(20,30,50,0.12)"></div>
<div class="a" style="left:2538px;top:962px;width:20px;height:604px;background:#f3f4f6"></div>
<div class="a" style="left:2540px;top:965px;width:16px;height:355px;background:#858f9e;border-radius:8px"></div>
<div class="a" style="left:1980px;top:992px;width:543px;height:98px;border:6px solid #6b4cf3;border-radius:12px"></div>
<div class="a" style="left:1991px;top:1009px;width:515px;height:63px;background:#fff;border:2px solid #d9dce1;border-radius:5px"></div>
<svg class="a" style="left:2008px;top:1025px;" width="32" height="32" viewBox="0 0 30 30" fill="none"><circle cx="12" cy="12" r="9.5" stroke="#6b7585" stroke-width="2"/><path d="M19 19 L27 27" stroke="#6b7585" stroke-width="2" stroke-linecap="round"/></svg>
<div class="t" style="left:2064.0px;top:1029.1px;font-size:25.4px;color:#8a94a3;">Search employee</div>
<div class="t" style="left:1991.0px;top:1111.5px;font-size:25.2px;color:#5e6a7b;">Team members can also log hours</div>
<svg class="a" style="left:2389px;top:1116px;" width="24" height="24" viewBox="0 0 24 24" fill="none"><circle cx="12" cy="12" r="10" stroke="#7d8797" stroke-width="1.8"/><path d="M12 10.5 V17" stroke="#7d8797" stroke-width="1.8"/><circle cx="12" cy="7.3" r="1.1" fill="#7d8797"/></svg>
<div class="a" style="left:1958px;top:1175px;width:580px;height:2px;background:#eceef2"></div>
<div class="t" style="left:1990.0px;top:1225.4px;font-size:19.7px;color:#5e6a7b;letter-spacing:0.5px;">UNASSIGNED</div>
<div class="a" style="left:1990px;top:1282.5px;width:63px;height:63px;border-radius:50%;background:#5a9ae6"></div>
<div class="t" style="left:1990px;width:63px;text-align:center;top:1302.3px;font-size:28px;color:#fff">AC</div>
<div class="t" style="left:2074.0px;top:1302.7px;font-size:25.2px;color:#161c26;">Anna Carla Hernandez</div>
<div class="a" style="left:1990px;top:1378.0px;width:63px;height:63px;border-radius:50%;background:#7abccb"></div>
<div class="t" style="left:1990px;width:63px;text-align:center;top:1397.8px;font-size:28px;color:#fff">MD</div>
<div class="t" style="left:2074.0px;top:1398.2px;font-size:25.2px;color:#161c26;">Marcus Dale Lewis</div>
<div class="a" style="left:1990px;top:1474.2px;width:63px;height:63px;border-radius:50%;background:#84cdb5"></div>
<div class="t" style="left:1990px;width:63px;text-align:center;top:1494.0px;font-size:28px;color:#fff">KJ</div>
<div class="t" style="left:2074.0px;top:1494.4px;font-size:25.2px;color:#161c26;">Kristen Joy Harper</div>
<div class="a" style="left:2461px;top:875px;width:99px;height:91px;background:#fff;border:8px solid #6b4cf3;border-radius:13px"></div>
<svg class="a" style="left:2480px;top:895px;" width="60" height="50" viewBox="0 0 60 50" fill="none"><g stroke="#5546a8" stroke-width="1.9" stroke-linecap="round" stroke-linejoin="round"><circle cx="17.9" cy="16.9" r="4"/><circle cx="41.9" cy="16.9" r="4"/><circle cx="29.9" cy="25.1" r="5.3"/><path d="M10.7 30.6 C10.7 27.5 13 25.5 16.5 25.5 H21"/><path d="M38.8 25.5 H42.5 C45.5 25.5 47.8 26.5 48.8 27.5"/><path d="M31.6 34.8 H28 C22 34.8 18.6 38.5 18.6 43 H34.7"/><path d="M41.9 28.2 V43.7 M34.4 35.8 H49.8"/></g></svg>
</body></html>
